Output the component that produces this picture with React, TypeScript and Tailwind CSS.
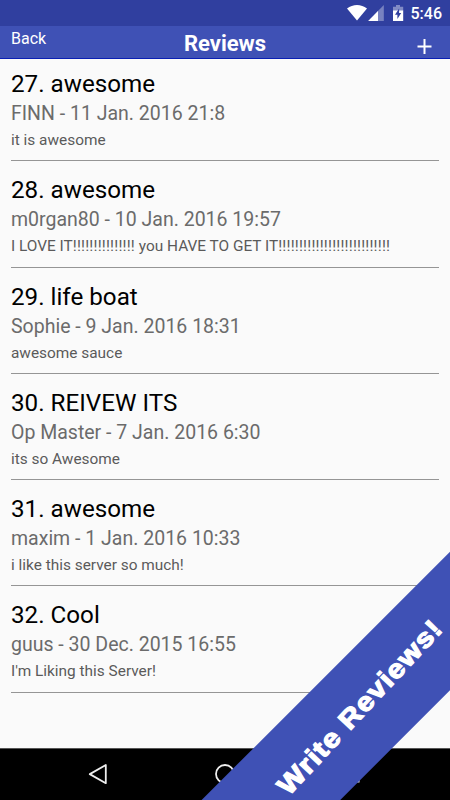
type Review = {
  id: number;
  title: string;
  author: string;
  date: string;
  text: string;
};

const reviews: Review[] = [
  { id: 27, title: "awesome", author: "FINN", date: "11 Jan. 2016 21:8", text: "it is awesome" },
  {
    id: 28,
    title: "awesome",
    author: "m0rgan80",
    date: "10 Jan. 2016 19:57",
    text: "I LOVE IT!!!!!!!!!!!!!!! you HAVE TO GET IT!!!!!!!!!!!!!!!!!!!!!!!!!!!",
  },
  { id: 29, title: "life boat", author: "Sophie", date: "9 Jan. 2016 18:31", text: "awesome sauce" },
  { id: 30, title: "REIVEW ITS", author: "Op Master", date: "7 Jan. 2016 6:30", text: "its so Awesome" },
  { id: 31, title: "awesome", author: "maxim", date: "1 Jan. 2016 10:33", text: "i like this server so much!" },
  { id: 32, title: "Cool", author: "guus", date: "30 Dec. 2015 16:55", text: "I'm Liking this Server!" },
];

function StatusBar() {
  return (
    <div className="flex h-[26px] items-center justify-end bg-[#303f9f] pr-[8px] text-white">
      <svg className="h-[26px] w-[60px]" viewBox="0 0 60 26">
        {/* wifi */}
        <path d="M1 8.4C6.8 3.7 15.2 3.7 21 8.4L11 20.4Z" fill="#fff" />
        {/* signal */}
        <path d="M37.8 5V21H22.2Z" fill="#fff" fillOpacity="0.35" />
        <path d="M32 11V21H22.2Z" fill="#fff" />
        {/* battery */}
        <path d="M50 5h4v1.7h3.2V11H47V6.7h3Z" fill="#fff" fillOpacity="0.4" />
        <path d="M47 10.5h10.2V21H47Z" fill="#fff" />
        <path d="M53.1 8.5L49 14.8H51.4V19L55.2 12.9H53.1Z" fill="#303f9f" />
      </svg>
      <span className="mt-px ml-[5px] text-[16px] leading-[26px] font-medium">5:46</span>
    </div>
  );
}

function Header() {
  return (
    <div className="grid h-[33px] grid-cols-3 border-b border-[#0a1fb4] bg-[#3f51b5] text-white">
      <span className="pl-[11px] text-[16px] leading-[25px]">Back</span>
      <span className="text-center text-[22px] leading-[36px] font-bold">Reviews</span>
      <div className="flex justify-end pt-[13px] pr-[18px]">
        <svg className="size-[15px]" viewBox="0 0 15 15">
          <path d="M7.5 0V15M0.5 7.5H14.5" stroke="#fff" strokeWidth="2" />
        </svg>
      </div>
    </div>
  );
}

function ReviewItem({ review }: { review: Review }) {
  // long runs of "!" are spaced a little wider than the words
  const parts = review.text.split(/(!{2,})/);

  return (
    <div className="h-[106.3px] border-b border-[#959595] pt-[14px] whitespace-nowrap">
      <div className="text-[24.2px] leading-[31px] text-black">
        {review.id}. {review.title}
      </div>
      <div className="text-[19.5px] leading-[27px] text-[#6b6b6b]">
        {review.author} - {review.date}
      </div>
      <div className="text-[15.4px] leading-[27px] text-[#5a5a5a]">
        {parts.map((part, i) => (
          <span key={i} className={part.startsWith("!!") ? "tracking-[0.18px]" : ""}>
            {part}
          </span>
        ))}
      </div>
    </div>
  );
}

function NavBar() {
  return (
    <div className="flex h-[52px] items-center justify-around border-t border-[#555] bg-black px-[35px]">
      <svg className="size-[22px]" viewBox="0 0 22 22" fill="none" stroke="#eee" strokeWidth="1.8">
        <path d="M18.8 1V19.2L2.8 10.1Z" strokeLinejoin="round" />
      </svg>
      <svg className="size-[22px]" viewBox="0 0 22 22" fill="none" stroke="#eee" strokeWidth="1.8">
        <circle cx="11" cy="10" r="9" />
      </svg>
      <svg className="size-[22px]" viewBox="0 0 22 22" fill="none" stroke="#eee" strokeWidth="1.8">
        <rect x="2" y="2" width="15.6" height="15.6" />
      </svg>
    </div>
  );
}

export default function App() {
  return (
    <div className="relative flex h-[800px] w-[450px] flex-col overflow-hidden bg-[#fafafa] font-['Roboto',sans-serif]">
      <StatusBar />
      <Header />

      {/* REVIEWS */}
      <div className="-mt-[4px] flex-1 px-[11px]">
        {reviews.map((review) => (
          <ReviewItem key={review.id} review={review} />
        ))}
      </div>

      <NavBar />

      {/* RIBBON */}
      <div className="absolute top-[651px] left-[96px] h-[98.3px] w-[550px] -rotate-45 bg-[#3f51b5]" />
      <div className="absolute top-[696px] left-[255px] flex h-[22px] w-[210px] [transform:rotate(-47deg)_scaleX(1.13)] items-center justify-center font-['Liberation_Sans',sans-serif] text-[26.5px] leading-[22px] font-bold tracking-[1px] whitespace-nowrap text-white [-webkit-text-stroke:1.2px_white]">
        Write Reviews!
      </div>
    </div>
  );
}
